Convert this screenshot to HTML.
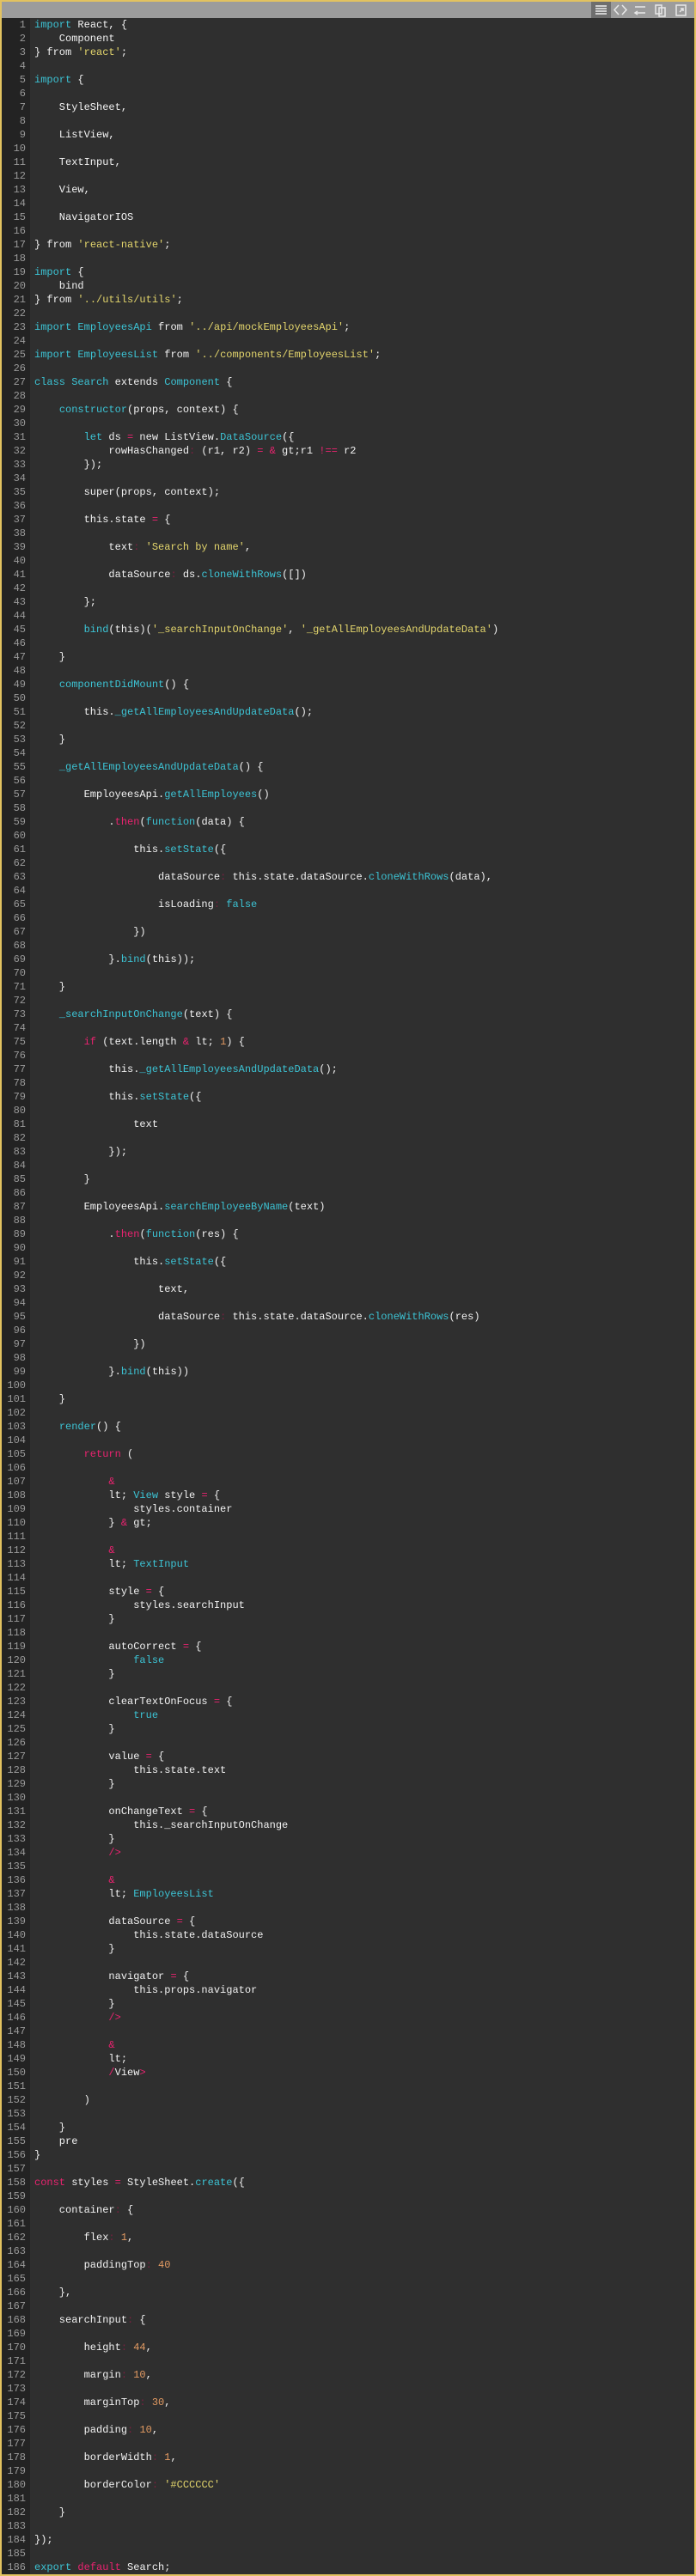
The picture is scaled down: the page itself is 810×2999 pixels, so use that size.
<!DOCTYPE html>
<html><head><meta charset="utf-8">
<style>
html,body{margin:0;padding:0;background:#2f2f2f;}
body{width:810px;height:2999px;position:relative;overflow:hidden;}
.frame{position:absolute;left:0;top:0;width:806px;height:2995px;border:2px solid #e2c260;}
.hdr{position:absolute;left:2px;top:2px;width:806px;height:19px;background:#9c9c9c;}
.gut{position:absolute;left:2px;top:21px;width:33px;height:2976px;background:#232323;}
pre{margin:0;font-family:"Liberation Mono",monospace;font-size:12px;line-height:16px;position:absolute;top:21px;}
.ln{left:2px;width:28px;text-align:right;color:#9a9a9a;}
.code{left:40px;color:#f2f2f2;}
.k{color:#3cc3d4}.p{color:#e8236f}.s{color:#e3d56c}.n{color:#e29a62}.c{color:#7a2040}
.icons{position:absolute;right:4px;top:3px;height:16px;}
</style></head><body>
<div class="hdr"></div>
<svg style="position:absolute;left:688px;top:2px" width="118" height="19" viewBox="0 0 118 19">
<rect x="0" y="0" width="23" height="19" fill="#6e6e6e"/>
<g stroke="#f0f0f0" stroke-width="1.5"><line x1="5" y1="5" x2="18" y2="5"/><line x1="5" y1="8" x2="18" y2="8"/><line x1="5" y1="11" x2="18" y2="11"/><line x1="5" y1="14" x2="18" y2="14"/></g>
<g stroke="#e8e8e8" stroke-width="1.5" fill="none"><polyline points="32,4 27,9.5 32,15"/><polyline points="36,4 41,9.5 36,15"/>
<line x1="51" y1="6" x2="63" y2="6"/><line x1="51" y1="13" x2="63" y2="13"/><polyline points="54,11 51,13 54,15"/>
<rect x="75" y="4" width="7" height="10"/><rect x="79" y="7" width="7" height="10"/>
<rect x="99" y="4" width="11" height="12"/><polyline points="103,12 107,8"/><polyline points="104,8 107,8 107,11"/></g>
</svg>
<div class="gut"></div>
<pre class="ln" id="ln"></pre>
<pre class="code"><span class="k">import</span> React, {
    Component
} from <span class="s">'react'</span>;

<span class="k">import</span> {

    StyleSheet,

    ListView,

    TextInput,

    View,

    NavigatorIOS

} from <span class="s">'react-native'</span>;

<span class="k">import</span> {
    bind
} from <span class="s">'../utils/utils'</span>;

<span class="k">import</span> <span class="k">EmployeesApi</span> from <span class="s">'../api/mockEmployeesApi'</span>;

<span class="k">import</span> <span class="k">EmployeesList</span> from <span class="s">'../components/EmployeesList'</span>;

<span class="k">class</span> <span class="k">Search</span> extends <span class="k">Component</span> {

    <span class="k">constructor</span>(props, context) {

        <span class="k">let</span> ds <span class="p">=</span> new ListView.<span class="k">DataSource</span>({
            rowHasChanged<span class="c">:</span> (r1, r2) <span class="p">=</span> <span class="p">&amp;</span> gt;r1 <span class="p">!==</span> r2
        });

        super(props, context);

        this.state <span class="p">=</span> {

            text<span class="c">:</span> <span class="s">'Search by name'</span>,

            dataSource<span class="c">:</span> ds.<span class="k">cloneWithRows</span>([])

        };

        <span class="k">bind</span>(this)(<span class="s">'_searchInputOnChange'</span>, <span class="s">'_getAllEmployeesAndUpdateData'</span>)

    }

    <span class="k">componentDidMount</span>() {

        this.<span class="k">_getAllEmployeesAndUpdateData</span>();

    }

    <span class="k">_getAllEmployeesAndUpdateData</span>() {

        EmployeesApi.<span class="k">getAllEmployees</span>()

            .<span class="p">then</span>(<span class="k">function</span>(data) {

                this.<span class="k">setState</span>({

                    dataSource<span class="c">:</span> this.state.dataSource.<span class="k">cloneWithRows</span>(data),

                    isLoading<span class="c">:</span> <span class="k">false</span>

                })

            }.<span class="k">bind</span>(this));

    }

    <span class="k">_searchInputOnChange</span>(text) {

        <span class="p">if</span> (text.length <span class="p">&amp;</span> lt; <span class="n">1</span>) {

            this.<span class="k">_getAllEmployeesAndUpdateData</span>();

            this.<span class="k">setState</span>({

                text

            });

        }

        EmployeesApi.<span class="k">searchEmployeeByName</span>(text)

            .<span class="p">then</span>(<span class="k">function</span>(res) {

                this.<span class="k">setState</span>({

                    text,

                    dataSource<span class="c">:</span> this.state.dataSource.<span class="k">cloneWithRows</span>(res)

                })

            }.<span class="k">bind</span>(this))

    }

    <span class="k">render</span>() {

        <span class="p">return</span> (

            <span class="p">&amp;</span>
            lt; <span class="k">View</span> style <span class="p">=</span> {
                styles.container
            } <span class="p">&amp;</span> gt;

            <span class="p">&amp;</span>
            lt; <span class="k">TextInput</span>

            style <span class="p">=</span> {
                styles.searchInput
            }

            autoCorrect <span class="p">=</span> {
                <span class="k">false</span>
            }

            clearTextOnFocus <span class="p">=</span> {
                <span class="k">true</span>
            }

            value <span class="p">=</span> {
                this.state.text
            }

            onChangeText <span class="p">=</span> {
                this._searchInputOnChange
            }
            <span class="p">/&gt;</span>

            <span class="p">&amp;</span>
            lt; <span class="k">EmployeesList</span>

            dataSource <span class="p">=</span> {
                this.state.dataSource
            }

            navigator <span class="p">=</span> {
                this.props.navigator
            }
            <span class="p">/&gt;</span>

            <span class="p">&amp;</span>
            lt;
            <span class="p">/</span>View<span class="p">&gt;</span>

        )

    }
    pre
}

<span class="p">const</span> styles <span class="p">=</span> StyleSheet.<span class="k">create</span>({

    container<span class="c">:</span> {

        flex<span class="c">:</span> <span class="n">1</span>,

        paddingTop<span class="c">:</span> <span class="n">40</span>

    },

    searchInput<span class="c">:</span> {

        height<span class="c">:</span> <span class="n">44</span>,

        margin<span class="c">:</span> <span class="n">10</span>,

        marginTop<span class="c">:</span> <span class="n">30</span>,

        padding<span class="c">:</span> <span class="n">10</span>,

        borderWidth<span class="c">:</span> <span class="n">1</span>,

        borderColor<span class="c">:</span> <span class="s">'#CCCCCC'</span>

    }

});

<span class="k">export</span> <span class="p">default</span> Search;</pre>
<div class="frame"></div>
<script>
var s="";for(var i=1;i<=186;i++){s+=i+(i<186?"\n":"");}document.getElementById("ln").textContent=s;
</script>
</body></html>
